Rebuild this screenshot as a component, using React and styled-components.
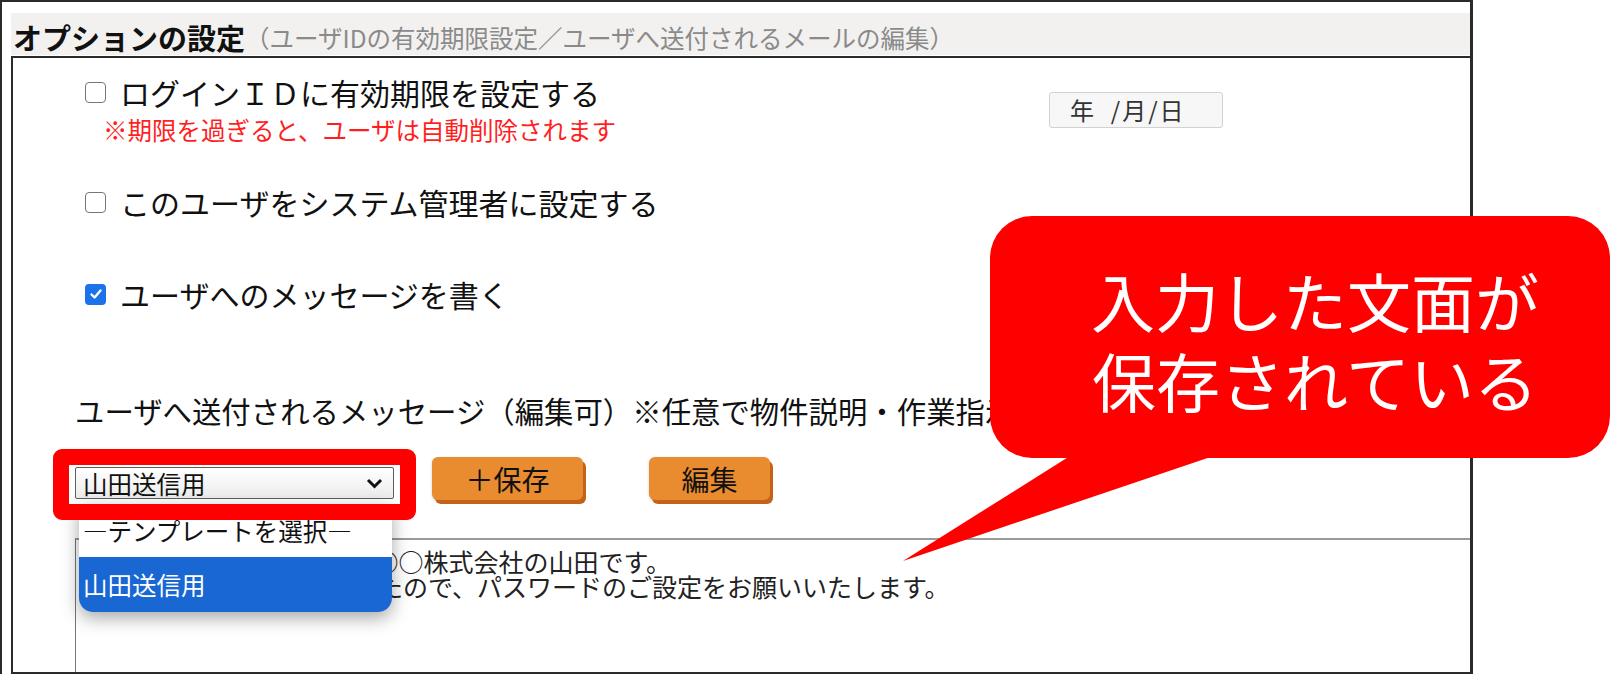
import React from 'react';
import styled, { createGlobalStyle } from 'styled-components';

const Global = createGlobalStyle`
  html, body {
    margin: 0;
    padding: 0;
    background: #fff;
    overflow: hidden;
  }
  body {
    font-family: "Noto Sans CJK JP", "Noto Sans", "Liberation Sans", sans-serif;
    color: #111;
  }
`

const Page = styled.div`
  position: relative;
  width: 1611px;
  height: 674px;
`

const Frame = styled.div`
  box-sizing: border-box;
  width: 1473px;
  height: 674px;
  border-top: 2px solid #2a2a2a;
  border-left: 2px solid #2a2a2a;
  border-right: 3px solid #2a2a2a;
  padding: 11px 0 0 9px;
  display: flex;
  flex-direction: column;
`

const Header = styled.div`
  height: 42px;
  margin-bottom: 1px;
  background: #f2f1f0;
  display: flex;
  align-items: center;
  padding: 6px 0 0 2px;
  box-sizing: border-box;
  white-space: nowrap;
`

const Title = styled.span`
  font-size: 29px;
  font-weight: 700;
  color: #111;
`

const Sub = styled.span`
  font-size: 24.5px;
  color: #8a8a8a;
`

const Panel = styled.div`
  flex: 1;
  box-sizing: border-box;
  border-top: 2px solid #2a2a2a;
  border-left: 2px solid #2a2a2a;
  border-bottom: 2px solid #2a2a2a;
  display: flex;
  flex-direction: column;
`

const Options = styled.div`
  padding: 16px 0 0 72px;
`

const OptionTop = styled.div`
  display: flex;
  align-items: center;
`

const OptionMain = styled.div`
  flex: 0 0 964px;
`

const CheckRow = styled.div`
  display: flex;
  align-items: center;
  gap: 14px;
  font-size: 30px;
  line-height: 36px;
  color: #111;
  margin-top: ${p => p.$gap || 0}px;
  white-space: nowrap;
`

const Box = styled.span`
  box-sizing: border-box;
  width: 21px;
  height: 21px;
  border-radius: 4px;
  border: ${p => (p.$on ? 'none' : '1.5px solid #767676')};
  background: ${p => (p.$on ? '#1a73e8' : '#fff')};
  display: flex;
  align-items: center;
  justify-content: center;
  flex: 0 0 auto;
`

const Note = styled.div`
  color: #ff1f1f;
  font-size: 24.5px;
  line-height: 30px;
  margin: 5px 0 0 18px;
  white-space: nowrap;
`

const DateInput = styled.div`
  box-sizing: border-box;
  width: 174px;
  height: 36px;
  background: #f7f7f7;
  border: 1px solid #d2d2d2;
  border-radius: 3px;
  font-size: 24px;
  line-height: 34px;
  letter-spacing: 2px;
  color: #333;
  padding-left: 20px;
  white-space: pre;
`

const Message = styled.div`
  flex: 1;
  display: flex;
  flex-direction: column;
  padding-left: 62px;
`

const MessageLabel = styled.div`
  margin-top: 80px;
  font-size: 29.4px;
  line-height: 36px;
  color: #111;
  white-space: nowrap;
`

const Controls = styled.div`
  margin-top: 29px;
  height: 47px;
  display: flex;
  align-items: flex-start;
`

const SelectWrap = styled.div`
  position: relative;
  margin-top: 10px;
  margin-right: 38px;
`

const Select = styled.div`
  box-sizing: border-box;
  width: 319px;
  height: 32px;
  border: 1px solid #5e5e5e;
  border-radius: 2px;
  background: linear-gradient(#ffffff, #ececec);
  display: flex;
  align-items: center;
  justify-content: space-between;
  padding: 0 10px 0 7px;
  font-size: 24.5px;
  color: #111;
`

const Highlight = styled.div`
  position: absolute;
  left: -22px;
  top: -18px;
  width: 363px;
  height: 71px;
  box-sizing: border-box;
  border: 16px solid #ff0000;
  border-radius: 9px;
  z-index: 3;
  pointer-events: none;
`

const Popup = styled.div`
  position: absolute;
  left: 4px;
  top: 37px;
  width: 313px;
  background: #fff;
  border-radius: 0 0 14px 14px;
  box-shadow: 0 6px 18px rgba(0, 0, 0, 0.35);
  overflow: hidden;
  z-index: 2;
`

const Option = styled.div`
  height: ${p => p.$h}px;
  display: flex;
  align-items: center;
  padding-left: 4px;
  font-size: 24.5px;
  color: ${p => (p.$active ? '#fff' : '#111')};
  background: ${p => (p.$active ? '#1967d2' : '#fff')};
  white-space: nowrap;
`

const Button = styled.div`
  box-sizing: border-box;
  width: ${p => p.$w}px;
  height: 43px;
  margin-right: ${p => p.$mr || 0}px;
  background: #e98b2f;
  border-radius: 6px;
  box-shadow: 3px 4px 0 #c4621a, 0 1px 3px rgba(0, 0, 0, 0.2);
  display: flex;
  align-items: center;
  justify-content: center;
  font-size: 28px;
  color: #111;
`

const MessageBox = styled.div`
  flex: 1;
  margin-top: 34px;
  border-top: 2px solid #9a9a9a;
  border-left: 1px solid #767676;
  padding: 9px 0 0 2px;
  font-size: 25px;
  line-height: 25px;
  color: #222;
  white-space: pre;
  overflow: hidden;
`

const Callout = styled.div`
  position: absolute;
  left: 990px;
  top: 216px;
  width: 620px;
  height: 242px;
  box-sizing: border-box;
  border-radius: 42px;
  background: #ff0000;
  color: #fff;
  display: flex;
  align-items: center;
  justify-content: center;
  text-align: center;
  padding: 4px 0 0 30px;
  font-size: 64px;
  line-height: 80px;
  z-index: 5;
`

const Tail = styled.svg`
  position: absolute;
  left: 890px;
  top: 440px;
  z-index: 4;
`

const Check = () => (
  <svg width="14" height="14" viewBox="0 0 14 14">
    <path d="M2.5 7.5 L5.6 10.5 L11.5 3.5" fill="none" stroke="#fff" strokeWidth="2.4" strokeLinecap="round" strokeLinejoin="round" />
  </svg>
)

const Chevron = () => (
  <svg width="17" height="11" viewBox="0 0 17 11">
    <path d="M2 2 L8.5 8.5 L15 2" fill="none" stroke="#111" strokeWidth="3" />
  </svg>
)

export default function App() {
  return (
    <Page>
      <Global />
      <Frame>
        <Header>
          <Title>オプションの設定</Title>
          <Sub>（ユーザIDの有効期限設定／ユーザへ送付されるメールの編集）</Sub>
        </Header>
        <Panel>
          <Options>
            <OptionTop>
              <OptionMain>
                <CheckRow>
                  <Box />
                  ログインＩＤに有効期限を設定する
                </CheckRow>
                <Note>※期限を過ぎると、ユーザは自動削除されます</Note>
              </OptionMain>
              <DateInput>{'年  /月/日'}</DateInput>
            </OptionTop>
            <CheckRow $gap={39}>
              <Box />
              このユーザをシステム管理者に設定する
            </CheckRow>
            <CheckRow $gap={56}>
              <Box $on><Check /></Box>
              ユーザへのメッセージを書く
            </CheckRow>
          </Options>
          <Message>
            <MessageLabel>ユーザへ送付されるメッセージ（編集可）※任意で物件説明・作業指示を入力できます</MessageLabel>
            <Controls>
              <SelectWrap>
                <Select>
                  <span>山田送信用</span>
                  <Chevron />
                </Select>
                <Popup>
                  <Option $h={53}>―テンプレートを選択―</Option>
                  <Option $h={55} $active>山田送信用</Option>
                </Popup>
                <Highlight />
              </SelectWrap>
              <Button $w={151} $mr={66}>＋保存</Button>
              <Button $w={121}>編集</Button>
            </Controls>
            <MessageBox>
              {'お世話になっております。○○株式会社の山田です。\nログインＩＤを発行しましたので、パスワードのご設定をお願いいたします。'}
            </MessageBox>
          </Message>
        </Panel>
      </Frame>
      <Tail width="380" height="130" viewBox="0 0 380 130">
        <polygon points="199,4 359,4 13,121" fill="#ff0000" />
      </Tail>
      <Callout>
        入力した文面が<br />保存されている
      </Callout>
    </Page>
  );
}
